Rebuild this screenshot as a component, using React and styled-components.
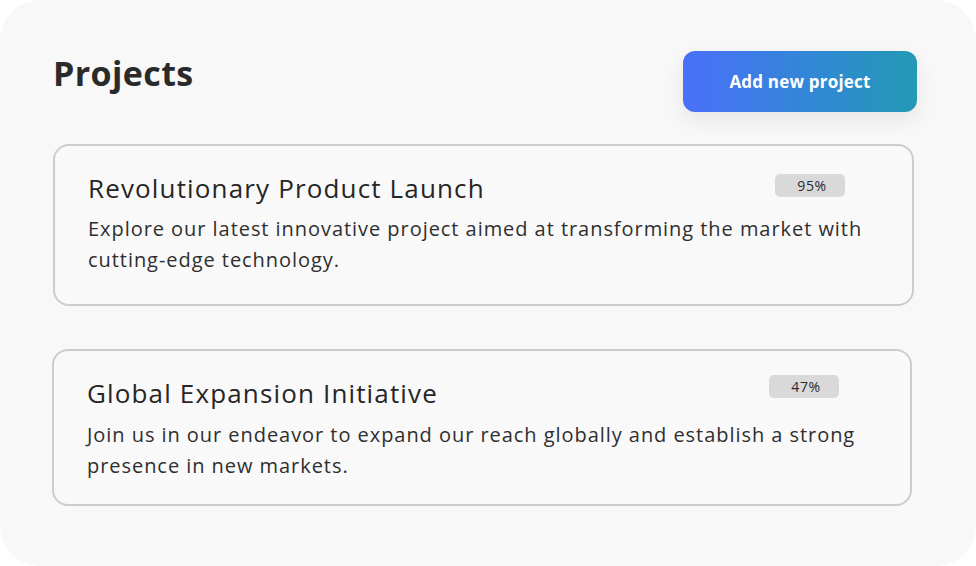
import React from "react";
import styled, { createGlobalStyle } from "styled-components";

const Global = createGlobalStyle`
  html, body { margin: 0; padding: 0; background: #ffffff; }
  body { font-family: "Open Sans", "Noto Sans", sans-serif; }
  * { box-sizing: border-box; }
`;

const Panel = styled.div`
  width: 976px;
  height: 566px;
  background: #f8f8f8;
  border-radius: 40px;
  padding: 51px 59px 0 53px;
  display: flex;
  flex-direction: column;
`;

const Header = styled.div`
  display: flex;
  align-items: flex-start;
  justify-content: space-between;
  height: 93px;
`;

const Title = styled.h1`
  margin: 0;
  font-size: 34px;
  font-weight: 700;
  color: #2a2a2a;
  letter-spacing: 0.4px;
  line-height: 44px;
`;

const AddButton = styled.button`
  width: 234px;
  height: 61px;
  border: none;
  border-radius: 12px;
  background: linear-gradient(90deg, #4b6ffa 0%, #2f8ad2 60%, #2499b4 100%);
  color: #ffffff;
  font-family: "Open Sans", sans-serif;
  font-size: 17px;
  font-weight: 700;
  letter-spacing: 0.2px;
  box-shadow: 0 8px 22px rgba(0, 0, 0, 0.08);
  cursor: pointer;
`;

const List = styled.div`
  display: flex;
  flex-direction: column;
  gap: 43px;
`;

const Card = styled.div`
  width: ${(p) => p.$w}px;
  margin-left: ${(p) => p.$ml}px;
  height: ${(p) => p.$h}px;
  border: 2px solid #cccccc;
  border-radius: 16px;
  background: #f9f9f9;
  padding: ${(p) => p.$pt}px 30px 0 33px;
`;

const CardHead = styled.div`
  display: flex;
  align-items: flex-start;
  justify-content: space-between;
  padding-right: ${(p) => p.$pr}px;
`;

const CardTitle = styled.h2`
  margin: 0;
  font-size: 26px;
  font-weight: 400;
  color: #262626;
  line-height: 34px;
  letter-spacing: 1.15px;
`;

const Badge = styled.span`
  width: 70px;
  height: 23px;
  margin-top: ${(p) => p.$mt}px;
  border-radius: 5px;
  background: #d9d9d9;
  color: #2a2a2a;
  font-size: 14px;
  line-height: 23px;
  letter-spacing: 0.6px;
  text-align: center;
  padding-left: 4px;
`;

const Desc = styled.p`
  margin: ${(p) => p.$mt}px 0 0;
  font-size: 20px;
  font-weight: 400;
  color: #2f2f2f;
  line-height: 31px;
  letter-spacing: 0.95px;
`;

const projects = [
  {
    title: "Revolutionary Product Launch",
    desc: "Explore our latest innovative project aimed at transforming the market with cutting-edge technology.",
    pct: "95%",
    w: 861, ml: 0, h: 162, pt: 25, pr: 37, mt: 3, dmt: 8,
  },
  {
    title: "Global Expansion Initiative",
    desc: "Join us in our endeavor to expand our reach globally and establish a strong presence in new markets.",
    pct: "47%",
    w: 860, ml: -1, h: 157, pt: 25, pr: 41, mt: -1, dmt: 9,
  },
];

export default function App() {
  return (
    <>
      <Global />
      <Panel>
        <Header>
          <Title>Projects</Title>
          <AddButton>Add new project</AddButton>
        </Header>
        <List>
          {projects.map((p) => (
            <Card key={p.title} $w={p.w} $ml={p.ml} $h={p.h} $pt={p.pt}>
              <CardHead $pr={p.pr}>
                <CardTitle>{p.title}</CardTitle>
                <Badge $mt={p.mt}>{p.pct}</Badge>
              </CardHead>
              <Desc $mt={p.dmt}>{p.desc}</Desc>
            </Card>
          ))}
        </List>
      </Panel>
    </>
  );
}
